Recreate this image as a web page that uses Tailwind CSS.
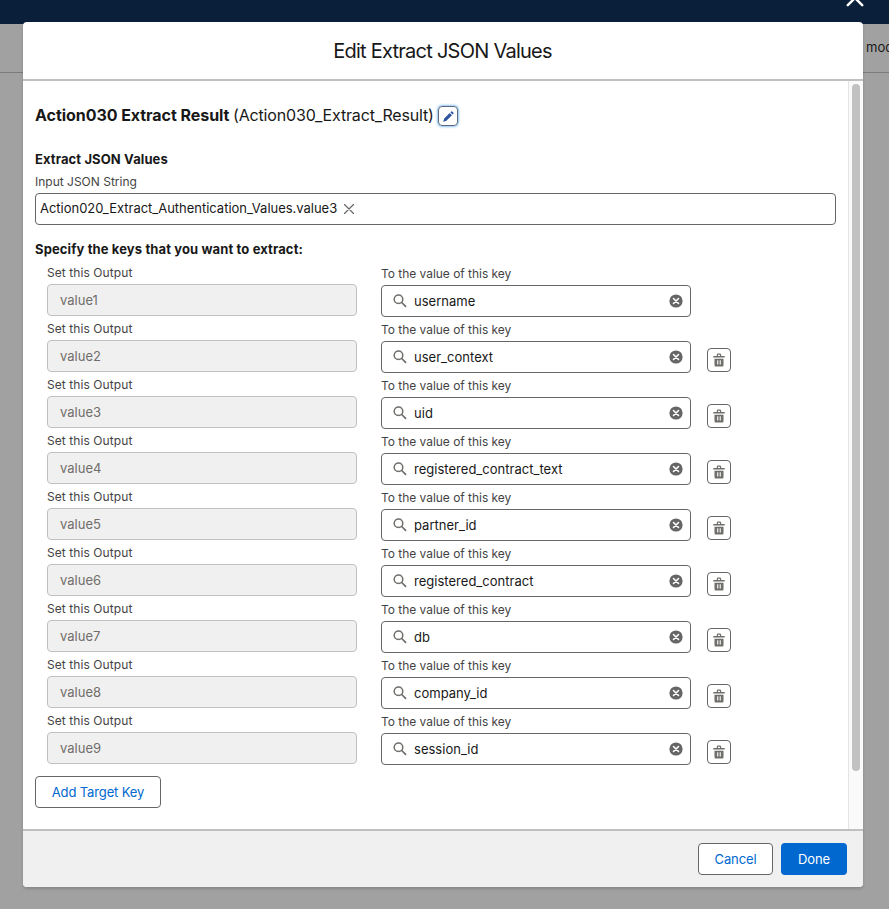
<!DOCTYPE html>
<html lang="en">
<head>
<meta charset="utf-8">
<title>Edit Extract JSON Values</title>
<script src="https://cdn.jsdelivr.net/npm/@tailwindcss/browser@4"></script>
</head>
<body class="relative h-[909px] w-[889px] overflow-hidden bg-[#a1a1a1] font-['Inter','Liberation_Sans',sans-serif] text-[13px] text-[#181818]">
<svg class="hidden">
  <symbol id="search" viewBox="0 0 14 14"><circle cx="5.500" cy="5.300" r="4.300" fill="none" stroke="#706e6b" stroke-width="1.500"/><path d="M8.700 8.500L12.600 12.400" stroke="#706e6b" stroke-width="1.700" stroke-linecap="round"/></symbol>
  <symbol id="clear" viewBox="0 0 14 14"><circle cx="7" cy="7" r="6.6" fill="#666"/><path d="M4.5 4.5l5 5M9.5 4.5l-5 5" stroke="#fff" stroke-width="1.6" stroke-linecap="round"/></symbol>
  <symbol id="trash" viewBox="0 0 12 14"><path d="M4.400 3V2Q4.400 1.200 5.200 1.200H6.800Q7.600 1.200 7.600 2V3" fill="none" stroke="#706e6b" stroke-width="1.200"/><rect x=".2" y="3" width="11.600" height="1.600" rx=".6" fill="#706e6b"/><path fill-rule="evenodd" fill="#706e6b" d="M1.500 5.700h9v6.600q0 1.300-1.300 1.300H2.800q-1.300 0-1.300-1.300zM4.200 7.300v4.300h1.100V7.300zM6.700 7.300v4.300H7.800V7.300z"/></symbol>
</svg>
<header class="h-6 bg-[#091f3a]"></header>
<div class="flex h-[49px] items-center justify-end border-b border-[#7c7c7c]"><span class="w-[23px] overflow-hidden whitespace-nowrap text-[13px]">modified</span></div>
<svg class="absolute left-[845px] top-[-12px]" width="20" height="20" viewBox="0 0 20 20"><path d="M2.800 2.800L17.200 17.200M17.200 2.800L2.800 17.200" stroke="#fff" stroke-width="2.500" stroke-linecap="round"/></svg>

<section class="absolute left-[23px] top-[22px] flex h-[865px] w-[840px] flex-col overflow-hidden rounded-[4px] bg-white shadow-[0_2px_3px_rgba(0,0,0,0.16)]">
  <h1 class="flex h-[59px] shrink-0 items-center justify-center border-b-2 border-[#c0c0c0] pr-px text-[20px] tracking-[-0.75px]"><span>Edit Extract JSON Values</span></h1>
  <div class="flex h-[748px] shrink-0">
    <main class="flex-1 pl-3 pt-6">
      <div class="flex h-[22px] items-center text-[16px] whitespace-nowrap">
        <span class="w-[198px] pb-[2px] font-bold tracking-[-0.05px]">Action030 Extract Result</span>
        <span class="w-[201px] pb-[2px] tracking-[-0.16px]">(Action030_Extract_Result)</span>
        <button class="ml-1 flex size-5 items-center justify-center rounded-[4px] border border-[#5c6b7c] shadow-[0_0_3px_#1b83e0]"><svg width="11" height="11" viewBox="0 0 12 12" fill="#2d54a0"><path d="M1.300 8.300L7.300 2.300L9.700 4.700L3.700 10.700L.6 11.700Q.2 11.800.3 11.400zM8.100 1.500L9 .6Q9.500 .1 10.100.6L11.400 1.900Q11.900 2.500 11.400 3L10.500 3.900z"/></svg></button>
      </div>
      <h2 class="mt-[23px] h-[19px] font-bold leading-[19px] tracking-[0.11px]"><span>Extract JSON Values</span></h2>
      <p class="mt-[3px] h-[19px] text-[12px] leading-[19px] text-[#444]"><span>Input JSON String</span></p>
      <div class="mt-[2px] flex h-8 w-[801px] items-center rounded-[4px] border border-[#666] pl-1">
        <span class="tracking-[-0.02px]">Action020_Extract_Authentication_Values.value3</span>
        <svg class="ml-[7px]" width="10" height="10" viewBox="0 0 10 10"><path d="M.5 .5l9 9M9.500 .5l-9 9" stroke="#666" stroke-width="1.200" stroke-linecap="round"/></svg>
      </div>
      <h2 class="mt-[15px] h-[19px] font-bold leading-[19px] tracking-[0.12px]"><span>Specify the keys that you want to extract:</span></h2>
      <div id="rows" class="h-[507px] pl-3 pt-[6px]"></div>
      <button class="mt-[10px] flex h-8 w-[126px] items-center justify-center rounded-[4px] border border-[#666] pt-px tracking-[-0.13px] text-[#0068cf]"><span>Add Target Key</span></button>
    </main>
    <div class="flex w-[15px] justify-center border-l border-[#e4e4e4] bg-[#fafafa] pt-[3px]"><div class="h-[687px] w-2 rounded-full bg-[#c1c1c1]"></div></div>
  </div>
  <footer class="flex flex-1 items-start justify-end gap-2 border-t-2 border-[#c0c0c0] bg-[#f0f0f0] pr-4 pt-3">
    <button class="h-8 w-[75px] rounded-[4px] border border-[#666] bg-white pt-px tracking-[-0.1px] text-[#0068cf]"><span>Cancel</span></button>
    <button class="h-8 w-[66px] rounded-[4px] bg-[#0068cf] pt-px tracking-[-0.1px] text-white"><span>Done</span></button>
  </footer>
</section>
<script>
const keys = ['username','user_context','uid','registered_contract_text','partner_id','registered_contract','db','company_id','session_id'];
document.getElementById('rows').innerHTML = keys.map((key, i) => `
  <div class="flex h-14 items-start">
    <div class="w-[310px]">
      <div class="h-[19px] text-[12px] leading-[16px] tracking-[0.08px] text-[#444]"><span>Set this Output</span></div>
      <div class="flex h-8 items-center rounded-[4px] border border-[#c0c0c0] bg-[#f0f0f0] pl-3 pt-[2px] text-[#706e6b]"><span>value${i + 1}</span></div>
    </div>
    <div class="ml-6 w-[310px] pt-[1px]">
      <div class="h-[19px] text-[12px] leading-[16px] tracking-[-0.03px] text-[#444]"><span>To the value of this key</span></div>
      <div class="flex h-8 items-center rounded-[4px] border border-[#666] pl-[11px] pr-[7px]">
        <svg class="mr-[7px]" width="14" height="14"><use href="#search"/></svg>
        <span class="pt-[2px] tracking-[0.02px]">${key}</span>
        <svg class="ml-auto" width="14" height="14"><use href="#clear"/></svg>
      </div>
    </div>
    ${i ? '<button class="ml-4 mt-[27px] flex size-6 items-center justify-center rounded-[4px] border border-[#666]"><svg width="12" height="14"><use href="#trash"/></svg></button>' : ''}
  </div>`).join('');
</script>
</body>
</html>
